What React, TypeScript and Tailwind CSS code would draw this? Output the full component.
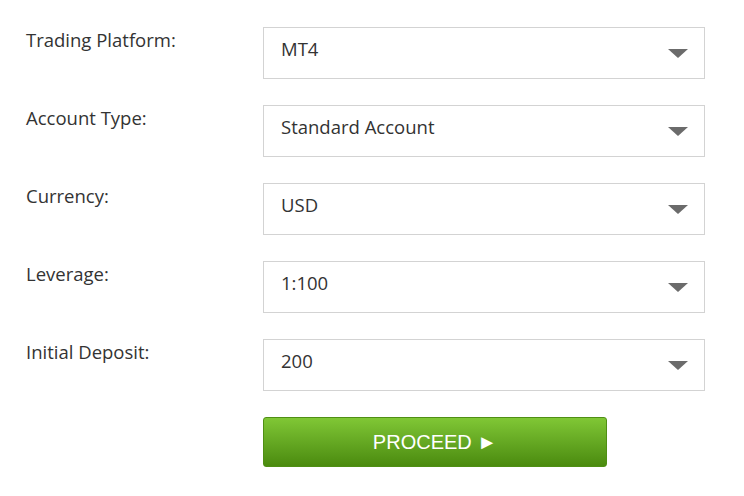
import React from "react";

const FIELDS = [
  { label: "Trading Platform:", value: "MT4" },
  { label: "Account Type:", value: "Standard Account" },
  { label: "Currency:", value: "USD" },
  { label: "Leverage:", value: "1:100" },
  { label: "Initial Deposit:", value: "200" },
];

function Caret() {
  return (
    <svg width="20" height="9" viewBox="0 0 20 9" className="shrink-0">
      <polygon points="0,0 20,0 10,9" fill="#6b6b6b" />
    </svg>
  );
}

export default function App() {
  return (
    <div
      className="h-[496px] w-[744px] bg-white pl-[26px] pt-[27px] text-[#333]"
      style={{ fontFamily: '"Open Sans", "Noto Sans", sans-serif' }}
    >
      <div className="flex flex-col gap-[26px]">
        {FIELDS.map((f) => (
          <div key={f.label} className="flex items-start">
            <div className="w-[237px] pt-[1px] text-[18.5px] leading-[24px]">{f.label}</div>
            <div className="flex h-[52px] w-[442px] items-center justify-between border border-[#d3d3d3] pl-[17px] pr-[16px]">
              <span className="pb-[8px] text-[18.5px] leading-[24px]">{f.value}</span>
              <Caret />
            </div>
          </div>
        ))}
      </div>
      <div className="mt-[26px] pl-[237px]">
        <button
          className="flex h-[50px] w-[344px] items-center justify-center rounded-[3px] border border-[#4f8f14] bg-gradient-to-b from-[#80c735] to-[#4b8b0e] text-[20px] text-white"
          style={{ fontFamily: '"Liberation Sans", Arial, sans-serif' }}
        >
          PROCEED ►
        </button>
      </div>
    </div>
  );
}
